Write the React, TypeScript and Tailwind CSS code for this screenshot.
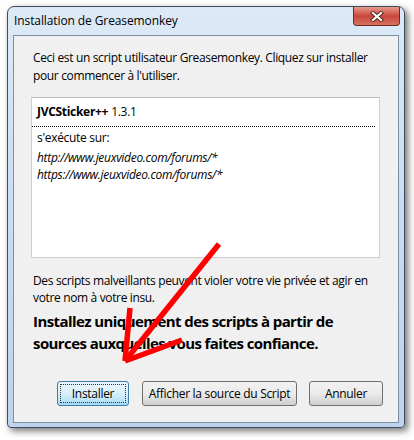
import React from "react";

function CloseGlyph() {
  return (
    <svg width="14" height="11" viewBox="0 0 14 11">
      <path d="M3 2 L11 9 M11 2 L3 9" stroke="#5a2a24" strokeWidth="4.2" strokeLinecap="square" />
      <path d="M3 2 L11 9 M11 2 L3 9" stroke="#ffffff" strokeWidth="2.2" strokeLinecap="square" />
    </svg>
  );
}

function Arrow() {
  return (
    <svg className="absolute left-0 top-0 pointer-events-none" width="414" height="440" viewBox="0 0 414 440">
      <g stroke="#ff0000" strokeWidth="5.5" strokeLinecap="butt" fill="none">
        <line x1="219" y1="244" x2="125" y2="361" />
        <line x1="130" y1="308" x2="125" y2="361" />
        <line x1="182" y1="340" x2="125" y2="361" />
      </g>
    </svg>
  );
}

export default function App() {
  return (
    <div className="relative w-[414px] h-[440px] bg-white overflow-hidden font-['Open_Sans','Noto_Sans',sans-serif] text-[12px] text-black">
      <div className="ml-[7px] mt-[6px] w-[398px] h-[422px] rounded-t-[7px] rounded-b-[4px] border border-[#3d4b5c] bg-gradient-to-b from-[#dde9f6] via-[#c9dcf1] to-[#bed3ec] shadow-[3px_3px_7px_rgba(0,0,0,0.55)] flex flex-col">
        <div className="h-[28px] flex items-start justify-between pr-[4px]">
          <div className="pl-[6px] pt-[6px] text-[12px] leading-[16px] text-black tracking-[-0.1px]">Installation de Greasemonkey</div>
          <div className="w-[47px] h-[19px] rounded-b-[4px] border border-t-0 border-[#6e2a22] bg-gradient-to-b from-[#e79a8e] via-[#c8473a] to-[#d6705f] flex items-center justify-center">
            <CloseGlyph />
          </div>
        </div>
        <div className="flex-1 mx-[5px] mb-[4px] border border-[#7f8fa3] bg-[#f0f0f0] flex flex-col">
          <div className="mt-[13px] ml-[19px] leading-[18px] tracking-[-0.35px]">
            <div>Ceci est un script utilisateur Greasemonkey. Cliquez sur installer</div>
            <div>pour commencer à l'utiliser.</div>
          </div>
          <div className="mt-[12px] ml-[17px] w-[349px] h-[161px] bg-white border border-[#cfcfcf] border-t-[#b9b9b9]">
            <div className="h-[28px] flex items-center pl-[5px] tracking-[-0.3px]">
              <span className="font-bold">JVCSticker++</span>
              <span className="ml-[3px]">1.3.1</span>
            </div>
            <div className="mx-[0px] w-[343px] border-t border-dotted border-black"></div>
            <div className="pl-[5px] pt-[2px] leading-[18px] tracking-[-0.3px]">s'exécute sur:</div>
            <div className="pl-[5px] pt-[2px] italic leading-[17px] tracking-[-0.3px]">
              <div>http://www.jeuxvideo.com/forums/*</div>
              <div>https://www.jeuxvideo.com/forums/*</div>
            </div>
          </div>
          <div className="mt-[14px] ml-[19px] leading-[17px] tracking-[-0.35px]">
            <div>Des scripts malveillants peuvent violer votre vie privée et agir en</div>
            <div>votre nom à votre insu.</div>
          </div>
          <div className="mt-[4px] ml-[19px] text-[15px] font-bold leading-[22px] tracking-[-0.58px]">
            <div>Installez uniquement des scripts à partir de</div>
            <div>sources auxquelles vous faites confiance.</div>
          </div>
          <div className="mt-[27px] flex items-center">
            <div className="ml-[43px] w-[72px] h-[25px] rounded-[3px] border border-[#3c7fb1] bg-gradient-to-b from-[#eaf6fd] via-[#d9f0fc] to-[#a7d9f5] p-[2px]">
              <div className="w-full h-full border border-dotted border-[#333] flex items-center justify-center leading-none tracking-[-0.3px]">Installer</div>
            </div>
            <div className="ml-[13px] w-[155px] h-[25px] rounded-[3px] border border-[#707070] bg-gradient-to-b from-[#f2f2f2] via-[#ebebeb] to-[#cfcfcf] flex items-center justify-center tracking-[-0.3px]">Afficher la source du Script</div>
            <div className="ml-[12px] w-[74px] h-[25px] rounded-[3px] border border-[#707070] bg-gradient-to-b from-[#f2f2f2] via-[#ebebeb] to-[#cfcfcf] flex items-center justify-center tracking-[-0.3px]">Annuler</div>
          </div>
        </div>
      </div>
      <Arrow />
    </div>
  );
}
